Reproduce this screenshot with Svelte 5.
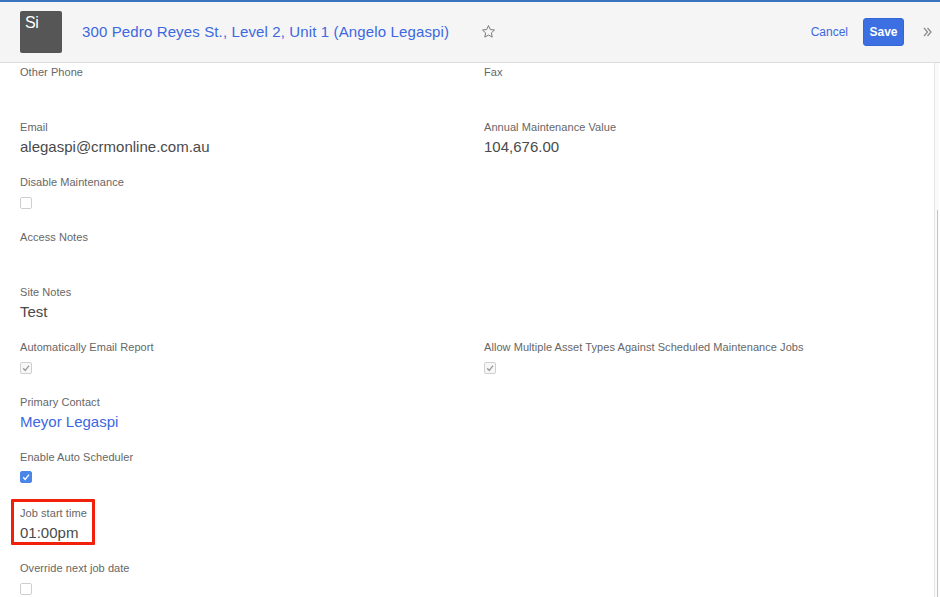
<script>
  const rows = [
    [{ label: 'Other Phone' }, { label: 'Fax' }],
    [{ label: 'Email', value: 'alegaspi@crmonline.com.au' }, { label: 'Annual Maintenance Value', value: '104,676.00' }],
    [{ label: 'Disable Maintenance', check: 'off' }, {}],
    [{ label: 'Access Notes' }, {}],
    [{ label: 'Site Notes', value: 'Test' }, {}],
    [{ label: 'Automatically Email Report', check: 'disabled' }, { label: 'Allow Multiple Asset Types Against Scheduled Maintenance Jobs', check: 'disabled' }],
    [{ label: 'Primary Contact', link: 'Meyor Legaspi' }, {}],
    [{ label: 'Enable Auto Scheduler', check: 'on' }, {}],
    [{ label: 'Job start time', value: '01:00pm', mark: true }, {}],
    [{ label: 'Override next job date', check: 'off' }, {}]
  ];
</script>

<main>
  <header>
    <div class="logo">Si</div>
    <a class="title" href="#top">300 Pedro Reyes St., Level 2, Unit 1 (Angelo Legaspi)</a>
    <svg class="star" width="15" height="15" viewBox="0 0 15 15">
      <path d="M7.5 1.6l1.8 3.9 4.2.5-3.1 2.9.8 4.2-3.7-2.1-3.7 2.1.8-4.2-3.1-2.9 4.2-.5z" fill="none" stroke="#7a7a7a" stroke-width="1" stroke-linejoin="round" />
    </svg>
    <a class="cancel" href="#top">Cancel</a>
    <button class="save">Save</button>
    <svg class="more" width="9" height="10" viewBox="0 0 9 10">
      <path d="M1 1l3.5 4L1 9M4.5 1L8 5 4.5 9" fill="none" stroke="#8a8a8a" stroke-width="1.2" />
    </svg>
  </header>

  <div class="body">
    <div class="form">
      {#each rows as row}
        <div class="row">
          {#each row as f}
            <div class="field" class:mark={f.mark}>
              {#if f.label}
                <div class="label">{f.label}</div>
              {/if}
              {#if f.value}
                <div class="value">{f.value}</div>
              {/if}
              {#if f.link}
                <a class="value link" href="#top">{f.link}</a>
              {/if}
              {#if f.check}
                <span class="check {f.check}">
                  {#if f.check != 'off'}
                    <svg width="10" height="10" viewBox="0 0 10 10">
                      <path d="M2.2 5.2l2 2.3L8 2.6" fill="none" stroke-width="1.3" />
                    </svg>
                  {/if}
                </span>
              {/if}
            </div>
          {/each}
        </div>
      {/each}
    </div>
    <aside><div class="thumb"></div></aside>
  </div>
</main>

<style>
  :global(body) {
    margin: 0;
    background: #fff;
    overflow: hidden;
  }

  main {
    width: 940px;
    height: 597px;
    overflow: hidden;
    font-family: "Liberation Sans", Arial, sans-serif;
    color: #4a4a4a;
  }

  header {
    height: 60px;
    display: flex;
    align-items: center;
    padding-left: 20px;
    background: #f5f5f5;
    border-top: 2px solid #3a75bf;
    border-bottom: 1px solid #dcdcdc;
  }

  .logo {
    width: 42px;
    height: 42px;
    box-sizing: border-box;
    padding: 3px 0 0 5px;
    background: #565656;
    border-radius: 2px;
    color: #fff;
    font-size: 16px;
    line-height: 18px;
    letter-spacing: -0.5px;
  }

  .title {
    margin-left: 20px;
    margin-top: -1px;
    color: #3c68e0;
    font-size: 15px;
    letter-spacing: 0.13px;
    text-decoration: none;
  }

  .star {
    margin-left: 32px;
    margin-top: -2px;
  }

  .cancel {
    margin-left: auto;
    margin-top: -1px;
    color: #3c68e0;
    font-size: 12px;
    text-decoration: none;
  }

  .save {
    width: 41px;
    height: 28px;
    margin-left: 15px;
    padding: 0;
    border: 1px solid #3566d8;
    border-radius: 3px;
    background: #3c6fe2;
    color: #fff;
    font-family: inherit;
    font-size: 12px;
    font-weight: bold;
  }

  .more {
    margin-left: 19px;
    margin-right: 8px;
  }

  .body {
    display: flex;
    height: 534px;
  }

  .form {
    flex: 1;
    padding-left: 20px;
  }

  .row {
    display: grid;
    grid-template-columns: 464px 1fr;
    height: 55px;
  }

  .row:nth-child(8) {
    height: 56px;
  }

  .field {
    align-self: start;
    padding-top: 3px;
  }

  .label {
    height: 13px;
    font-size: 11px;
    line-height: 13px;
    letter-spacing: 0.06px;
    color: #666;
  }

  .value {
    display: block;
    margin-top: 3px;
    font-size: 15px;
    line-height: 20px;
  }

  .link {
    color: #3c68e0;
    text-decoration: none;
  }

  /* red highlight drawn over the field */
  .mark {
    justify-self: start;
    box-sizing: border-box;
    width: 84px;
    height: 46px;
    margin: -5px 0 0 -9px;
    padding: 5px 0 0 6px;
    border: 3px solid #f0200a;
    border-radius: 1px;
  }

  .check {
    display: block;
    box-sizing: border-box;
    width: 12px;
    height: 12px;
    margin-top: 8px;
    border: 1px solid #cfcfcf;
    border-radius: 2px;
    background: #fff;
  }

  .check svg {
    display: block;
  }

  .disabled {
    background: #f7f7f7;
  }

  .disabled path {
    stroke: #9a9a9a;
  }

  .on {
    margin-top: 7px;
    border-color: #4a86e8;
    background: #4a86e8;
  }

  .on path {
    stroke: #fff;
  }

  aside {
    width: 4px;
    margin-right: 1px;
    border-left: 1px solid #e6e6e6;
    background: #fafafa;
  }

  .thumb {
    width: 1px;
    height: 400px;
    margin: 147px 0 0 2px;
    background: #c4c4c4;
  }
</style>
